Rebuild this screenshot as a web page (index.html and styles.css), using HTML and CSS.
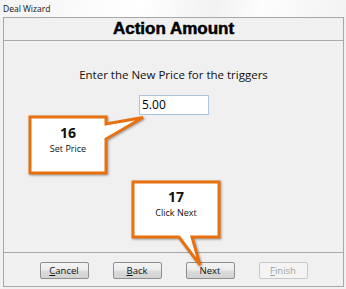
FILE: index.html
```
<!DOCTYPE html>
<html>
<head>
<meta charset="utf-8">
<link rel="stylesheet" href="styles.css">
</head>
<body>
<div class="window">
  <div class="titlebar">Deal Wizard</div>
  <div class="frame">
    <div class="header">Action Amount</div>
    <div class="content">
      <div class="prompt">Enter the New Price for the triggers</div>
      <div class="input">5.00</div>
    </div>
    <div class="footer">
      <div class="btn"><u>C</u>ancel</div>
      <div class="btn"><u>B</u>ack</div>
      <div class="btn">Next</div>
      <div class="btn disabled"><u>F</u>inish</div>
    </div>
  </div>
  <svg class="callouts" width="346" height="289" viewBox="0 0 346 289">
    <polygon points="30,117 106,117 106,124 143,117.5 106,139 106,173 30,173" />
    <polygon points="133,182 219,182 219,237 192,237 200,265 179,237 133,237" />
  </svg>
  <div class="note note16"><b>16</b><span>Set Price</span></div>
  <div class="note note17"><b>17</b><span>Click Next</span></div>
</div>
</body>
</html>
```
FILE: styles.css
```
html, body {
  margin: 0;
  padding: 0;
}
body {
  width: 346px;
  height: 289px;
  overflow: hidden;
  background: #f0f0f0;
  font-family: "Open Sans", "Noto Sans", sans-serif;
}
.window {
  position: relative;
  width: 346px;
  height: 289px;
  display: flex;
  flex-direction: column;
  background: linear-gradient(100deg, #f4f4f4 0%, #ffffff 40%, #f2f2f2 62%, #fdfdfd 75%, #f3f3f3 100%) top / 100% 17px no-repeat, #f0f0f0;
}
.titlebar {
  height: 17px;
  box-sizing: border-box;
  padding: 3px 0 0 3px;
  font-size: 8.5px;
  line-height: 11px;
  color: #111;
}
.frame {
  margin-left: 3px;
  width: 341px;
  height: 270px;
  box-sizing: border-box;
  border: 1px solid #a8a8a8;
  display: flex;
  flex-direction: column;
  background: #f0f0f0;
}
.header {
  height: 23px;
  box-sizing: border-box;
  border-bottom: 1px solid #a8a8a8;
  text-align: center;
  font-family: "Liberation Sans", Arial, sans-serif;
  font-weight: 700;
  font-size: 17px;
  line-height: 22px;
  color: #000;
  -webkit-text-stroke: 0.5px #000;
}
.content {
  flex: 1;
  display: flex;
  flex-direction: column;
  align-items: center;
}
.prompt {
  margin-top: 26px;
  font-size: 11.5px;
  line-height: 16px;
  color: #111;
}
.input {
  margin-top: 12px;
  margin-left: 1px;
  width: 70px;
  height: 20px;
  box-sizing: border-box;
  background: #fff;
  border: 1px solid #adc4da;
  font-size: 12px;
  line-height: 18px;
  padding-left: 2px;
  color: #000;
}
.footer {
  height: 34px;
  box-sizing: border-box;
  border-top: 1px solid #a8a8a8;
  display: flex;
  justify-content: center;
  gap: 24px;
  padding-top: 9px;
}
.btn {
  width: 49px;
  height: 17px;
  box-sizing: border-box;
  border: 1px solid #8e8f8f;
  border-radius: 2px;
  background: linear-gradient(#f4f4f4 0%, #ececec 48%, #dcdcdc 52%, #d2d2d2 100%);
  font-size: 9.5px;
  line-height: 15px;
  text-align: center;
  color: #111;
}
.btn.disabled {
  background: #f4f4f4;
  border-color: #c8c8c8;
  color: #a0a0a0;
}
.callouts {
  position: absolute;
  left: 0;
  top: 0;
  pointer-events: none;
}
.callouts polygon {
  fill: #fff;
  stroke: #e8700f;
  stroke-width: 3;
  stroke-linejoin: miter;
  filter: drop-shadow(1px 1px 1px rgba(0,0,0,0.35));
}
.note {
  position: absolute;
  display: flex;
  flex-direction: column;
  align-items: center;
  color: #111;
}
.note b {
  font-family: "Open Sans", sans-serif;
  font-weight: 700;
  font-size: 14px;
  line-height: 16px;
}
.note span {
  font-size: 9px;
  line-height: 12px;
  margin-top: 2px;
}
.note16 {
  left: 30px;
  top: 125px;
  width: 76px;
}
.note17 {
  left: 133px;
  top: 189px;
  width: 86px;
}
```
